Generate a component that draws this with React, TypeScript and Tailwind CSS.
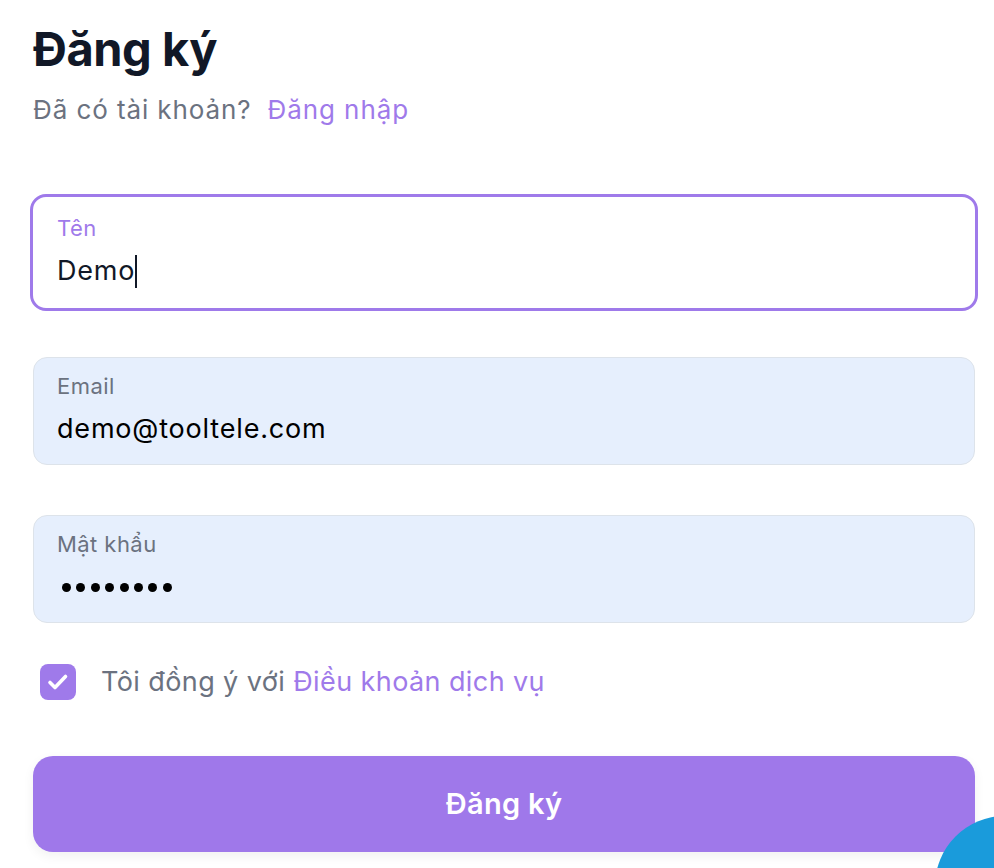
import React from "react";

export default function App() {
  return (
    <div className="relative h-[868px] w-[994px] overflow-hidden bg-white" style={{ fontFamily: "Inter, 'Noto Sans', sans-serif" }}>
      <div className="w-[942px] ml-[33px] pt-[21px]">
        <h1 className="text-[47px] font-bold leading-[56px] tracking-[-0.01em] text-[#111827]">Đăng ký</h1>
        <p className="mt-[16px] text-[26px] leading-[34px] tracking-[0.035em] text-[#6b7280]">
          Đã có tài khoản?<span className="ml-[16px] text-[#9f7aea]">Đăng nhập</span>
        </p>

        <div className="mt-[67px] -mx-[3px] h-[117px] rounded-[16px] border-[3px] border-[#9f7aea] bg-white px-[24px] pt-[16px]">
          <div className="text-[22px] leading-[30px] tracking-[0.02em] text-[#9f7aea]">Tên</div>
          <div className="mt-[11px] flex items-center text-[27px] leading-[34px] tracking-[0.03em] text-[#111827]">
            Demo<span className="inline-block h-[33px] w-[2px] bg-[#111827]" />
          </div>
        </div>

        <div className="mt-[46px] h-[108px] rounded-[14px] border border-[#dde3ea] bg-[#e6effd] px-[23px] pt-[13px]">
          <div className="text-[22px] leading-[30px] tracking-[0.02em] text-[#6b7280]">Email</div>
          <div className="mt-[11px] text-[27px] leading-[34px] tracking-[0.03em] text-black">demo@tooltele.com</div>
        </div>

        <div className="mt-[50px] h-[108px] rounded-[14px] border border-[#dde3ea] bg-[#e6effd] px-[23px] pt-[13px]">
          <div className="text-[22px] leading-[30px] tracking-[0.02em] text-[#6b7280]">Mật khẩu</div>
          <div className="mt-[11px] ml-[5px] flex h-[34px] items-center gap-[5.4px]">
            {Array.from({ length: 8 }).map((_, i) => (
              <span key={i} className="inline-block h-[9px] w-[9px] rounded-full bg-black" />
            ))}
          </div>
        </div>

        <div className="mt-[41px] flex items-center">
          <div className="ml-[7px] flex h-[36px] w-[36px] items-center justify-center rounded-[8px] bg-[#9f7aea]">
            <svg width="36" height="36" viewBox="0 0 36 36" fill="none">
              <path d="M10 18.5l5 5 10.5-11" stroke="white" strokeWidth="3.6" strokeLinecap="round" strokeLinejoin="round" />
            </svg>
          </div>
          <span className="ml-[25px] text-[27px] leading-[34px] tracking-[0.015em] text-[#6b7280]">
            Tôi đồng ý với <span className="text-[#9f7aea]">Điều khoản dịch vụ</span>
          </span>
        </div>

        <button className="mt-[56px] flex h-[96px] w-full items-center justify-center rounded-[20px] bg-[#9f78ea] text-[29px] font-semibold tracking-[0.01em] text-white shadow-[0_4px_12px_rgba(0,0,0,0.06)]">
          Đăng ký
        </button>
      </div>
      <div className="absolute left-[935px] top-[816px] h-[140px] w-[140px] rounded-full bg-[#1a9bdb]" />
    </div>
  );
}
